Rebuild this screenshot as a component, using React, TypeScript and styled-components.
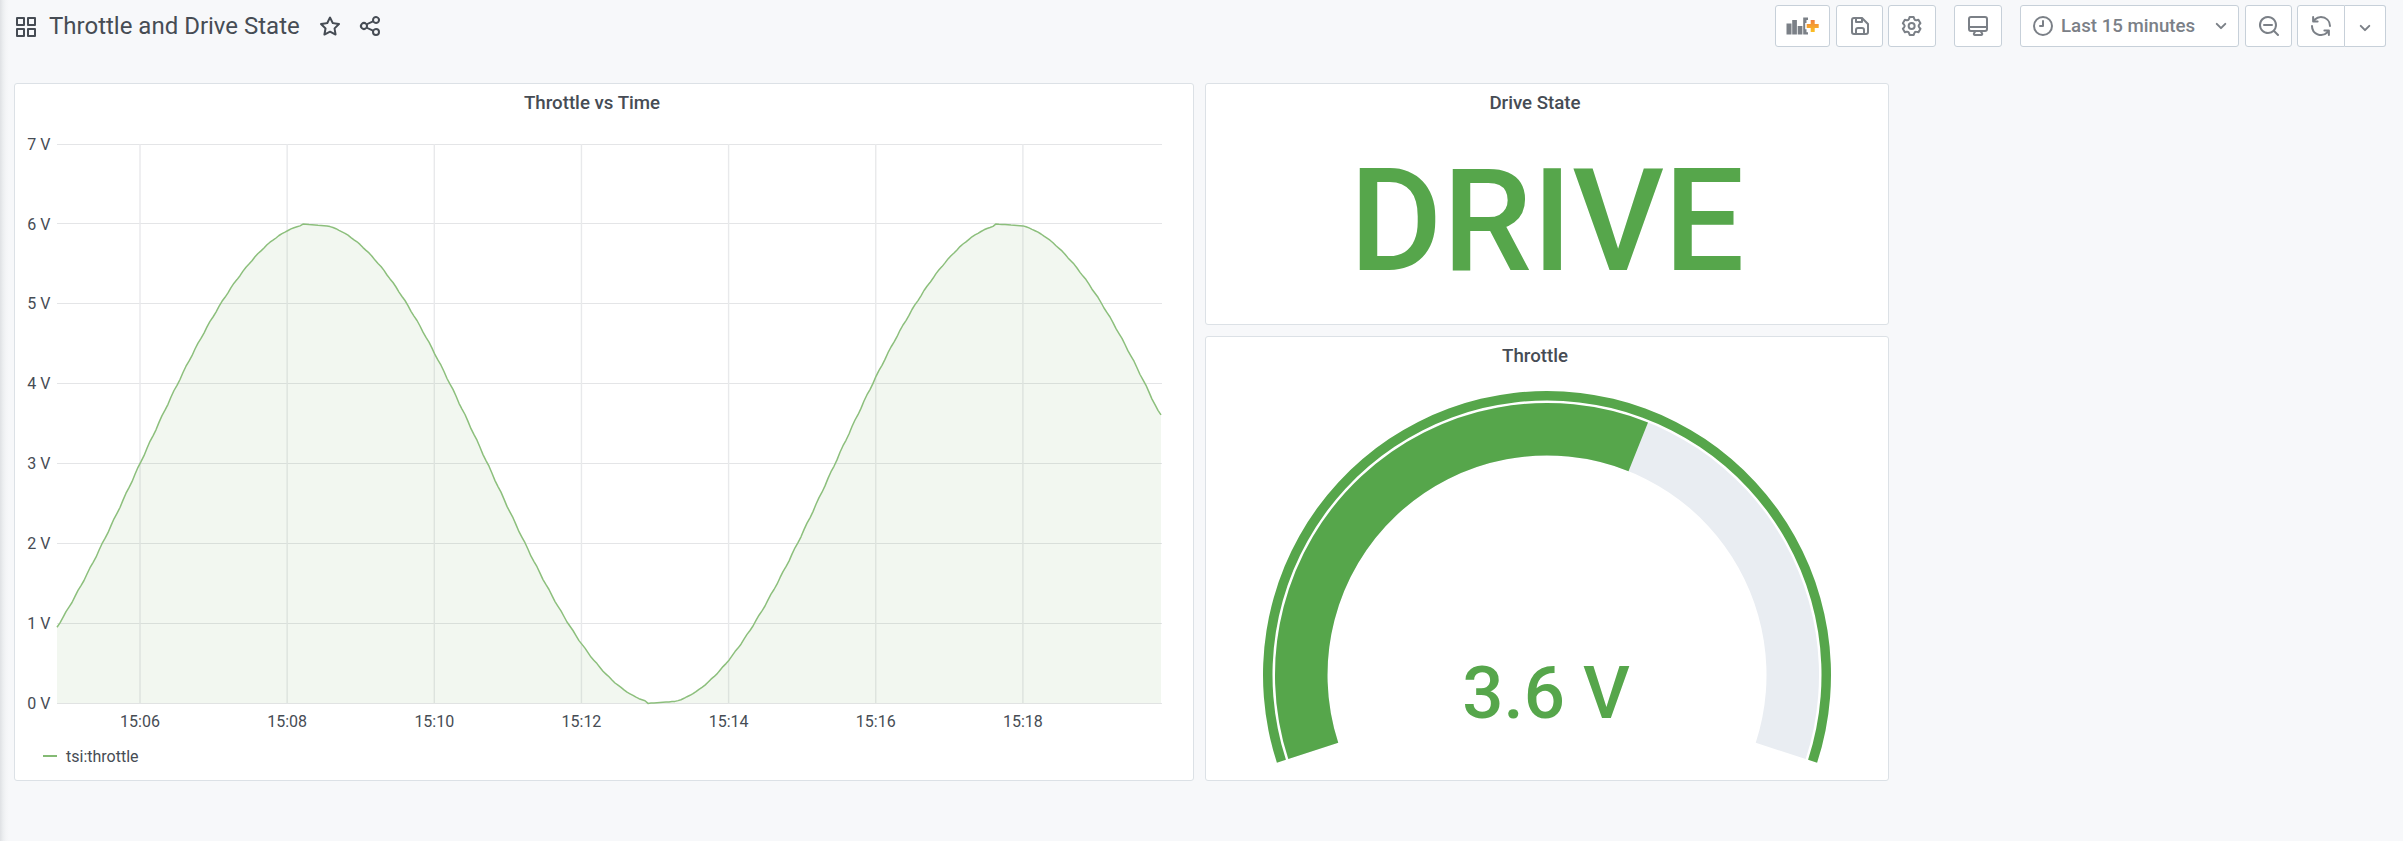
import React from "react";
import styled, { createGlobalStyle } from "styled-components";

const GlobalStyle = createGlobalStyle`
  * { box-sizing: border-box; }
  body { margin: 0; background: #f7f8fa; font-family: Roboto, "Liberation Sans", sans-serif; color: #464c54; }
`;

const Page = styled.div`
  height: 841px;
  padding: 5px 17px 0 14px;
  background: linear-gradient(90deg, #dfe1e4 0, #eceef0 3px, #f4f5f7 6px, #f7f8fa 9px);
`;
const Toolbar = styled.header`
  display: flex;
  align-items: flex-start;
  height: 78px;
`;
const Heading = styled.div`
  display: flex;
  align-items: center;
  height: 42px;
  flex: 1;
  svg { display: block; }
`;
const Title = styled.h1`
  margin: 0 18px 0 11px;
  font-size: 24px;
  line-height: 30px;
  font-weight: 400;
  white-space: nowrap;
`;
const IconSlot = styled.span<{ $gap?: number; $drop?: number }>`
  margin-right: ${(p) => p.$gap ?? 0}px;
  padding-top: ${(p) => p.$drop ?? 0}px;
`;
const Button = styled.button<{ $w: number; $gap?: number; $join?: "left" | "right" }>`
  display: flex;
  align-items: center;
  justify-content: center;
  width: ${(p) => p.$w}px;
  height: 42px;
  margin: 0 0 0 ${(p) => p.$gap ?? 0}px;
  padding: 0;
  color: #7b8087;
  background: #fff;
  border: 1px solid #c7d0d9;
  border-left-width: ${(p) => (p.$join === "right" ? 0 : 1)}px;
  border-radius: ${(p) => (p.$join === "left" ? "3px 0 0 3px" : p.$join === "right" ? "0 3px 3px 0" : "3px")};
`;
const IntervalButton = styled(Button)`
  padding-top: 4px;
`;
const RangeButton = styled(Button)`
  justify-content: flex-start;
  padding: 0 5px 0 10px;
  font: 500 18.7px Roboto, sans-serif;
  svg:last-child { margin-left: auto; }
`;
const RangeLabel = styled.span`
  margin-left: 6px;
  white-space: nowrap;
`;
const Dashboard = styled.main`
  display: grid;
  grid-template-columns: 1180px 684px;
  grid-template-rows: 242px 445px;
  gap: 11px;
`;
const Panel = styled.section<{ $tall?: boolean }>`
  grid-row: ${(p) => (p.$tall ? "1 / 3" : "auto")};
  display: flex;
  flex-direction: column;
  min-height: 0;
  overflow: hidden;
  background: #fff;
  border: 1px solid #dce1e6;
  border-radius: 3px;
`;
const PanelTitle = styled.h2`
  flex: none;
  margin: 0;
  height: 38px;
  padding-right: 24px;
  text-align: center;
  font-size: 18.7px;
  line-height: 39px;
  font-weight: 500;
`;
const Drawing = styled.svg`
  display: block;
  flex: none;
`;
const AxisText = styled.text`
  font: 400 16px Roboto, sans-serif;
  fill: #464c54;
`;
const Legend = styled.div`
  display: flex;
  align-items: center;
  height: 28px;
  padding-left: 28px;
  font-size: 16px;
`;
const Swatch = styled.i`
  width: 14px;
  height: 2px;
  margin-right: 9px;
  background: #84ba74;
`;
const Stat = styled.div`
  padding-left: 0;
  text-align: center;
  font-size: 142.3px;
  font-weight: 500;
  line-height: 200px;
  color: #56a64b;
`;
const GaugeValue = styled.text`
  font: 500 72.6px Roboto, sans-serif;
  fill: #56a64b;
  text-anchor: middle;
`;

const Glyph = ({ d, size = 24 }: { d: string; size?: number }) => (
  <svg width={size} height={size} viewBox="0 0 24 24" fill="currentColor">
    <path d={d} />
  </svg>
);

const APPS = "M10,13H3a1,1,0,0,0-1,1v7a1,1,0,0,0,1,1h7a1,1,0,0,0,1-1V14A1,1,0,0,0,10,13ZM9,20H4V15H9ZM21,2H14a1,1,0,0,0-1,1v7a1,1,0,0,0,1,1h7a1,1,0,0,0,1-1V3A1,1,0,0,0,21,2ZM20,9H15V4h5Zm1,4H14a1,1,0,0,0-1,1v7a1,1,0,0,0,1,1h7a1,1,0,0,0,1-1V14A1,1,0,0,0,21,13Zm-1,7H15V15h5ZM10,2H3A1,1,0,0,0,2,3v7a1,1,0,0,0,1,1h7a1,1,0,0,0,1-1V3A1,1,0,0,0,10,2ZM9,9H4V4H9Z";
const STAR = "M22,9.67A1,1,0,0,0,21.14,9l-5.69-.83L12.9,3a1,1,0,0,0-1.8,0L8.55,8.16,2.86,9a1,1,0,0,0-.81.68,1,1,0,0,0,.25,1l4.13,4-1,5.68A1,1,0,0,0,6.9,21.44L12,18.77l5.1,2.67a.93.93,0,0,0,.46.12,1,1,0,0,0,.59-.19,1,1,0,0,0,.4-1l-1-5.68,4.13-4A1,1,0,0,0,22,9.67Zm-6.15,4a1,1,0,0,0-.29.88l.72,4.2-3.76-2a1.06,1.06,0,0,0-.94,0l-3.76,2,.72-4.2a1,1,0,0,0-.29-.88l-3-3,4.21-.61a1,1,0,0,0,.76-.55L12,5.7l1.88,3.82a1,1,0,0,0,.76.55l4.21.61Z";
const SHARE = "M18,14a4,4,0,0,0-3.08,1.48l-5.1-2.35a3.64,3.64,0,0,0,0-2.26l5.1-2.35A4,4,0,1,0,14,6a4.17,4.17,0,0,0,.07.71L8.79,9.14a4,4,0,1,0,0,5.72l5.28,2.43A4.17,4.17,0,0,0,14,18a4,4,0,1,0,4-4ZM18,4a2,2,0,1,1-2,2A2,2,0,0,1,18,4ZM6,14a2,2,0,1,1,2-2A2,2,0,0,1,6,14Zm12,6a2,2,0,1,1,2-2A2,2,0,0,1,18,20Z";
const SAVE = "M20.71,9.29l-6-6a1,1,0,0,0-.32-.21A1.09,1.09,0,0,0,14,3H6A3,3,0,0,0,3,6V18a3,3,0,0,0,3,3H18a3,3,0,0,0,3-3V10A1,1,0,0,0,20.71,9.29ZM9,5h4V7H9Zm6,14H9V16a1,1,0,0,1,1-1h4a1,1,0,0,1,1,1Zm4-1a1,1,0,0,1-1,1H17V16a3,3,0,0,0-3-3H10a3,3,0,0,0-3,3v3H6a1,1,0,0,1-1-1V6A1,1,0,0,1,6,5H7V8A1,1,0,0,0,8,9h6a1,1,0,0,0,1-1V6.41l4,4Z";
const GEAR = "M19.9,12.66a1,1,0,0,1,0-1.32L21.18,9.9a1,1,0,0,0,.12-1.17l-2-3.46a1,1,0,0,0-1.07-.48l-1.88.38a1,1,0,0,1-1.15-.66l-.61-1.83A1,1,0,0,0,13.64,2h-4a1,1,0,0,0-1,.68L8.08,4.51a1,1,0,0,1-1.15.66L5,4.79A1,1,0,0,0,4,5.27L2,8.73A1,1,0,0,0,2.1,9.9l1.27,1.44a1,1,0,0,1,0,1.32L2.1,14.1A1,1,0,0,0,2,15.27l2,3.46a1,1,0,0,0,1.07.48l1.88-.38a1,1,0,0,1,1.15.66l.61,1.83a1,1,0,0,0,1,.68h4a1,1,0,0,0,.95-.68l.61-1.83a1,1,0,0,1,1.15-.66l1.88.38a1,1,0,0,0,1.07-.48l2-3.46a1,1,0,0,0-.12-1.17ZM18.41,14l.8.9-1.28,2.22-1.18-.24a3,3,0,0,0-3.45,2L12.92,20H10.36L10,18.86a3,3,0,0,0-3.45-2l-1.18.24L4.07,14.89l.8-.9a3,3,0,0,0,0-4l-.8-.9L5.35,6.89l1.18.24a3,3,0,0,0,3.45-2L10.36,4h2.56l.38,1.14a3,3,0,0,0,3.45,2l1.18-.24,1.28,2.22-.8.9A3,3,0,0,0,18.41,14ZM11.64,8a4,4,0,1,0,4,4A4,4,0,0,0,11.64,8Zm0,6a2,2,0,1,1,2-2A2,2,0,0,1,11.64,14Z";
const MONITOR = "M19,2H5A3,3,0,0,0,2,5V15a3,3,0,0,0,3,3H7.64l-.58,1a2,2,0,0,0,0,2,2,2,0,0,0,1.75,1h6.46A2,2,0,0,0,17,21a2,2,0,0,0,0-2l-.59-1H19a3,3,0,0,0,3-3V5A3,3,0,0,0,19,2ZM8.77,20,10,18H14l1.2,2ZM20,15a1,1,0,0,1-1,1H5a1,1,0,0,1-1-1V14H20Zm0-3H4V5A1,1,0,0,1,5,4H19a1,1,0,0,1,1,1Z";
const CLOCK = "M12,2A10,10,0,1,0,22,12,10,10,0,0,0,12,2Zm0,18a8,8,0,1,1,8-8A8,8,0,0,1,12,20ZM12,6a1,1,0,0,0-1,1v4H9a1,1,0,0,0,0,2h3a1,1,0,0,0,1-1V7A1,1,0,0,0,12,6Z";
const ANGLE = "M17,9.17a1,1,0,0,0-1.41,0L12,12.71,8.46,9.17a1,1,0,0,0-1.41,0,1,1,0,0,0,0,1.42l4.24,4.24a1,1,0,0,0,1.42,0L17,10.59A1,1,0,0,0,17,9.17Z";
const ZOOM_OUT = "M21.71,20.29,18,16.61A9,9,0,1,0,16.61,18l3.68,3.68a1,1,0,0,0,1.42,0A1,1,0,0,0,21.71,20.29ZM11,18a7,7,0,1,1,7-7A7,7,0,0,1,11,18Zm4-8H7a1,1,0,0,0,0,2h8a1,1,0,0,0,0-2Z";
const SYNC = "M19.91,15.51H15.38a1,1,0,0,0,0,2h2.4A8,8,0,0,1,4,12a1,1,0,0,0-2,0,10,10,0,0,0,16.88,7.23V21a1,1,0,0,0,2,0V16.5A1,1,0,0,0,19.91,15.51ZM12,2A10,10,0,0,0,5.12,4.77V3a1,1,0,0,0-2,0V7.5a1,1,0,0,0,1,1h4.5a1,1,0,0,0,0-2H6.22A8,8,0,0,1,20,12a1,1,0,0,0,2,0A10,10,0,0,0,12,2Z";

const AddPanelIcon = () => (
  <svg width="33" height="18" viewBox="0 0 33 18">
    <defs>
      <linearGradient id="plus" x1="0" y1="0" x2="0" y2="1">
        <stop offset="0" stopColor="#f0803f" />
        <stop offset="1" stopColor="#fbc022" />
      </linearGradient>
    </defs>
    <path
      fill="#7b8087"
      d="M.5 6.500h5v11h-5zM6.200 3h4.700v14.500H6.200zM11.700 9h4.700v8.500h-4.700zM17.200 0.500h4.800v2.500h-1.500v3h-1.300v6.200h1.300v3h1.500v2.300h-4.800z"
    />
    <path fill="url(#plus)" d="M24.700 3h4v4h4v4h-4v4h-4v-4h-4V7h4z" />
  </svg>
);

/* Plot geometry, in the chart's own pixels. */
const LEFT = 42;
const RIGHT = 1147;
const BASE = 581.35;
const UNIT = 79.9;
const toY = (v: number) => BASE - v * UNIT;
const gridY = (v: number) => Math.floor(toY(v)) + 0.5;
const TIMES = ["15:06", "15:08", "15:10", "15:12", "15:14", "15:16", "15:18"];
const timeX = (i: number) => 125 + i * 147.15;

const throttleAt = (x: number) => {
  const turn = [
    [286, 312, 6, 5.975],
    [633, 661, 0, 0.025],
    [981, 1008, 6, 5.975],
  ].find(([from, to]) => x >= from && x <= to);
  if (turn) return turn[2] + ((turn[3] - turn[2]) * (x - turn[0])) / (turn[1] - turn[0]);
  const t = x + 0.35 * Math.sin(x / 1.9);
  return 3 + 3 * Math.sin((2 * Math.PI * (t - 125)) / 695);
};
const curve: string[] = [];
for (let x = LEFT; x < RIGHT - 3; x += 3) curve.push(`${x},${toY(throttleAt(x)).toFixed(1)}`);
curve.push(`${RIGHT - 1},${toY(3.61)}`);
const line = curve.join(" ");

const Chart = () => (
  <Drawing width="1178" height="620" viewBox="0 0 1178 620">
    {[0, 1, 2, 3, 4, 5, 6, 7].map((v) => (
      <React.Fragment key={v}>
        <line x1={LEFT} x2={RIGHT} y1={gridY(v)} y2={gridY(v)} stroke="#e4e5e7" />
        <AxisText x="35.500" y={toY(v) + 5.6} textAnchor="end">{v} V</AxisText>
      </React.Fragment>
    ))}
    {TIMES.map((t, i) => (
      <React.Fragment key={t}>
        <line x1={timeX(i)} x2={timeX(i)} y1={toY(7)} y2={BASE} stroke="#e8e9eb" strokeWidth="1.4" />
        <AxisText x={timeX(i)} y="605" textAnchor="middle">{t}</AxisText>
      </React.Fragment>
    ))}
    <polygon points={`${LEFT},${BASE} ${line} ${RIGHT - 1},${BASE}`} fill="#7eb26d" fillOpacity="0.1" />
    <polyline points={line} fill="none" stroke="#8cbf7c" strokeWidth="1.5" strokeLinejoin="round" />
  </Drawing>
);

/* Gauge arcs are swept clockwise from straight up, in degrees. */
const CX = 341;
const CY = 300;
const ring = (inner: number, outer: number, from: number, to: number) => {
  const at = (r: number, deg: number) => {
    const a = (deg * Math.PI) / 180;
    return `${(CX + r * Math.sin(a)).toFixed(2)} ${(CY - r * Math.cos(a)).toFixed(2)}`;
  };
  const large = to - from > 180 ? 1 : 0;
  return `M${at(outer, from)}A${outer} ${outer} 0 ${large} 1 ${at(outer, to)}L${at(inner, to)}A${inner} ${inner} 0 ${large} 0 ${at(inner, from)}Z`;
};

const Gauge = () => (
  <Drawing width="682" height="405" viewBox="0 0 682 405">
    <path d={ring(219.5, 272, -108, 108)} fill="#e9edf2" />
    <path d={ring(219.5, 272, -108, 21.8)} fill="#56a64b" />
    <path d={ring(274.5, 284, -108, 108)} fill="#56a64b" />
    <GaugeValue x={CX - 1} y="343">3.6 V</GaugeValue>
  </Drawing>
);

export default function App() {
  return (
    <>
      <GlobalStyle />
      <Page>
        <Toolbar>
          <Heading>
            <IconSlot $drop={2}><Glyph d={APPS} /></IconSlot>
            <Title>Throttle and Drive State</Title>
            <IconSlot $gap={16}><Glyph d={STAR} /></IconSlot>
            <IconSlot><Glyph d={SHARE} /></IconSlot>
          </Heading>
          <Button $w={55}><AddPanelIcon /></Button>
          <Button $w={47} $gap={6}><Glyph d={SAVE} /></Button>
          <Button $w={48} $gap={5}><Glyph d={GEAR} /></Button>
          <Button $w={48} $gap={18}><Glyph d={MONITOR} /></Button>
          <RangeButton $w={219} $gap={18}>
            <Glyph d={CLOCK} />
            <RangeLabel>Last 15 minutes</RangeLabel>
            <Glyph d={ANGLE} />
          </RangeButton>
          <Button $w={47} $gap={6}><Glyph d={ZOOM_OUT} /></Button>
          <Button $w={48} $gap={5} $join="left"><Glyph d={SYNC} /></Button>
          <IntervalButton $w={41} $join="right"><Glyph d={ANGLE} /></IntervalButton>
        </Toolbar>
        <Dashboard>
          <Panel $tall>
            <PanelTitle>Throttle vs Time</PanelTitle>
            <Chart />
            <Legend><Swatch />tsi:throttle</Legend>
          </Panel>
          <Panel>
            <PanelTitle>Drive State</PanelTitle>
            <Stat>DRIVE</Stat>
          </Panel>
          <Panel>
            <PanelTitle>Throttle</PanelTitle>
            <Gauge />
          </Panel>
        </Dashboard>
      </Page>
    </>
  );
}
